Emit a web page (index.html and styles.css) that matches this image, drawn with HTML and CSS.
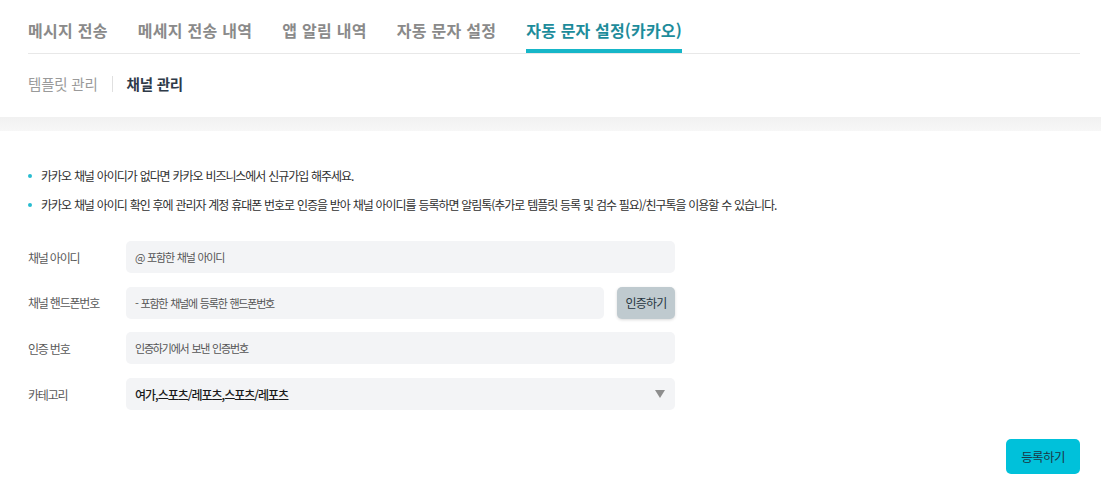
FILE: index.html
```html
<!DOCTYPE html>
<html lang="ko">
<head>
<meta charset="utf-8">
<title>자동 문자 설정(카카오)</title>
<link rel="stylesheet" href="styles.css">
</head>
<body>
<header class="header">
  <nav class="tabs">
    <a class="tab">메시지 전송</a>
    <a class="tab">메세지 전송 내역</a>
    <a class="tab">앱 알림 내역</a>
    <a class="tab">자동 문자 설정</a>
    <a class="tab tab-active">자동 문자 설정(카카오)</a>
  </nav>
  <nav class="subtabs">
    <a class="subtab">템플릿 관리</a>
    <span class="sep"></span>
    <a class="subtab subtab-active">채널 관리</a>
  </nav>
</header>
<div class="band"></div>
<main class="content">
  <ul class="notes">
    <li>카카오 채널 아이디가 없다면 카카오 비즈니스에서 신규가입 해주세요.</li>
    <li>카카오 채널 아이디 확인 후에 관리자 계정 휴대폰 번호로 인증을 받아 채널 아이디를 등록하면 알림톡(추가로 템플릿 등록 및 검수 필요)/친구톡을 이용할 수 있습니다.</li>
  </ul>
  <form class="form">
    <div class="row">
      <label class="label">채널 아이디</label>
      <div class="field"><span class="ph">@ 포함한 채널 아이디</span></div>
    </div>
    <div class="row">
      <label class="label">채널 핸드폰번호</label>
      <div class="field field-short"><span class="ph">- 포함한 채널에 등록한 핸드폰번호</span></div>
      <button type="button" class="btn-auth">인증하기</button>
    </div>
    <div class="row">
      <label class="label">인증 번호</label>
      <div class="field"><span class="ph">인증하기에서 보낸 인증번호</span></div>
    </div>
    <div class="row">
      <label class="label">카테고리</label>
      <div class="field field-select"><span class="val">여가,스포츠/레포츠,스포츠/레포츠</span><span class="arrow"></span></div>
    </div>
  </form>
  <div class="actions">
    <button type="button" class="btn-submit">등록하기</button>
  </div>
</main>
</body>
</html>
```
FILE: styles.css
```css
* { box-sizing: border-box; }
html, body { margin: 0; padding: 0; background: #fff; }
body {
  font-family: "Noto Sans CJK KR", "Noto Sans", sans-serif;
  color: #333;
  width: 1101px;
  height: 491px;
  overflow: hidden;
}
.header { padding: 0 21px 0 28px; }
.tabs {
  display: flex;
  gap: 30px;
  border-bottom: 1px solid #e8e8e8;
  padding-top: 18px;
}
.tab {
  font-size: 16px;
  font-weight: 700;
  letter-spacing: 0.28px;
  color: #8a8a8a;
  line-height: 24px;
  padding-bottom: 7px;
  border-bottom: 4px solid transparent;
}
.tab-active { color: #1d8c9b; border-bottom-color: #16b6c8; letter-spacing: 0.15px; }
.subtabs {
  display: flex;
  align-items: center;
  height: 63px;
  padding-bottom: 3px;
}
.subtab {
  font-size: 14.5px;
  letter-spacing: -0.2px;
  color: #9a9a9a;
  line-height: 20px;
}
.subtab-active { color: #2f3a48; font-weight: 700; }
.sep { width: 1px; height: 16px; background: #e0e0e0; margin: 0 14px; }
.band {
  height: 14px;
  background: linear-gradient(#f1f1f1, #f7f7f7);
}
.content { padding: 36px 21px 0 28px; }
.notes { list-style: none; margin: 0; padding: 0; display: flex; flex-direction: column; gap: 11px; }
.notes li {
  position: relative;
  padding-left: 13px;
  font-size: 12px;
  letter-spacing: -1.05px;
  word-spacing: 0.6px;
  line-height: 18px;
  color: #2f2f2f;
}
.notes li::before {
  content: "";
  position: absolute;
  left: 0;
  top: 7px;
  width: 4px;
  height: 4px;
  border-radius: 50%;
  background: #27bcd0;
}
.form { margin-top: 27px; display: flex; flex-direction: column; gap: 13.7px; width: 647px; }
.row { display: flex; align-items: center; height: 32px; }
.label {
  width: 98px;
  font-size: 12px;
  letter-spacing: -1.2px;
  color: #5a5a5a;
}
.field {
  flex: 1;
  height: 32px;
  background: #f3f4f6;
  border-radius: 5px;
  display: flex;
  align-items: center;
  padding: 0 9px;
}
.field-short { flex: 0 0 478px; }
.ph { font-size: 11px; letter-spacing: -1.2px; word-spacing: 1px; color: #555; }
.val { font-size: 12px; letter-spacing: -1px; color: #1a1a1a; font-weight: 500; flex: 1; }
.arrow {
  width: 0; height: 0;
  border-left: 5px solid transparent;
  border-right: 5px solid transparent;
  border-top: 8px solid #8e8e8e;
  margin-right: 1px;
}
.btn-auth {
  margin-left: 13px;
  width: 58px;
  height: 32px;
  border: 0;
  border-radius: 5px;
  background: #bfcacf;
  box-shadow: 0 1px 3px rgba(0,0,0,0.15);
  font-family: inherit;
  font-size: 12px;
  letter-spacing: -0.8px;
  color: #263540;
  padding: 0;
}
.actions { display: flex; justify-content: flex-end; margin-top: 29px; }
.btn-submit {
  width: 74px;
  height: 35px;
  border: 0;
  border-radius: 5px;
  background: #00c1da;
  font-family: inherit;
  font-size: 12.5px;
  letter-spacing: -0.6px;
  color: #1b3746;
  padding: 0;
}
```
